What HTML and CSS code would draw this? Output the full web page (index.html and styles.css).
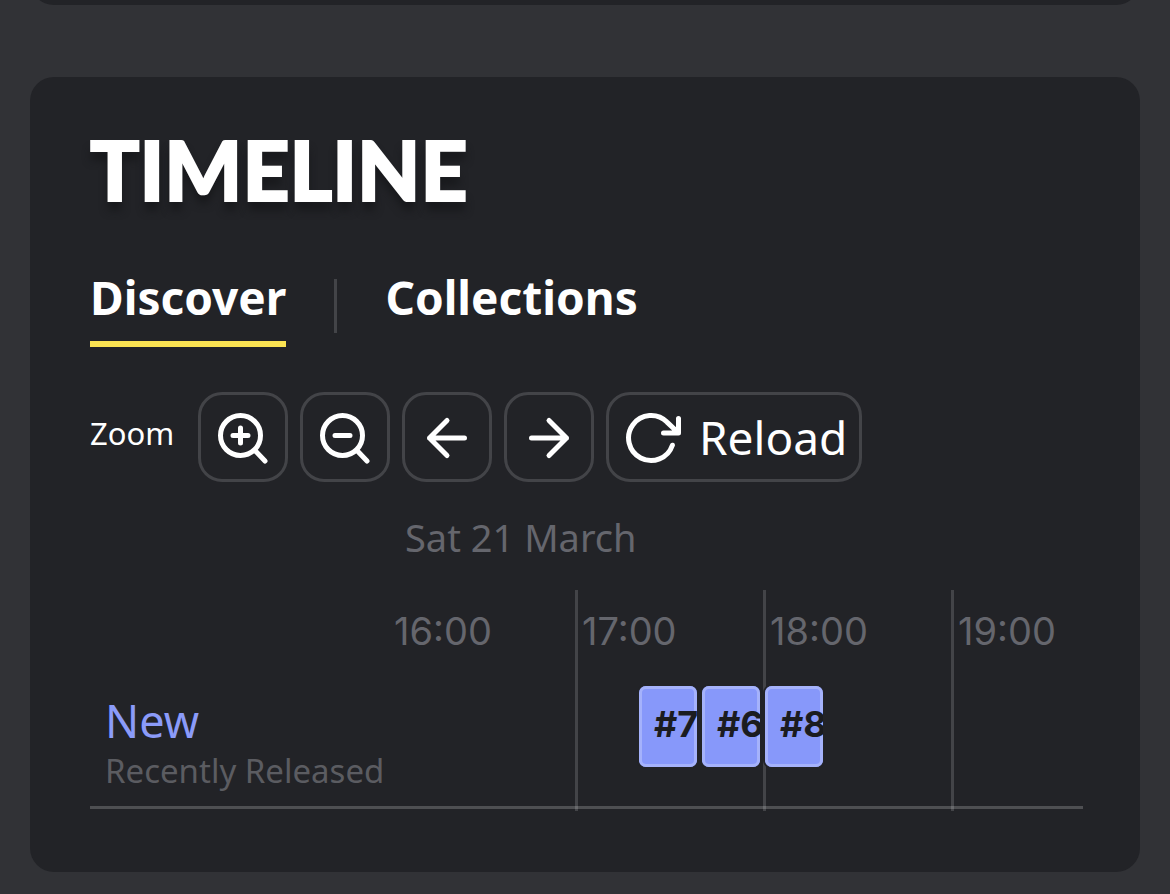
FILE: index.html
```html
<!DOCTYPE html>
<html lang="en">
<head>
<meta charset="utf-8">
<meta name="viewport" content="width=device-width, initial-scale=1">
<title>Timeline</title>
<link rel="stylesheet" href="styles.css">
</head>
<body>
<div class="card card-previous"></div>
<main class="card">
  <h1 class="title">TIMELINE</h1>
  <nav class="tabs">
    <a class="tab tab-active" href="#discover">Discover</a>
    <span class="tab-divider"></span>
    <a class="tab" href="#collections">Collections</a>
  </nav>
  <div class="toolbar">
    <span class="toolbar-label">Zoom</span>
    <button class="tool" type="button" aria-label="Zoom in">
      <svg class="icon" viewBox="0 0 54 54"><circle cx="24.5" cy="25.5" r="20"/><path d="M39 40.5l10 10.5M24.5 18v15M17 25.5h15"/></svg>
    </button>
    <button class="tool" type="button" aria-label="Zoom out">
      <svg class="icon" viewBox="0 0 54 54"><circle cx="24.5" cy="25.5" r="20"/><path d="M39 40.5l10 10.5M17 25.5h15"/></svg>
    </button>
    <button class="tool" type="button" aria-label="Earlier">
      <svg class="icon" viewBox="0 0 54 54"><path d="M44.5 28H9.5M27 10.5L9.5 28l17.5 17.5"/></svg>
    </button>
    <button class="tool" type="button" aria-label="Later">
      <svg class="icon" viewBox="0 0 54 54"><path d="M9.5 28H44.5M27 10.5L44.5 28l-17.5 17.5"/></svg>
    </button>
    <button class="tool tool-wide" type="button">
      <svg class="icon icon-wide" viewBox="0 0 58 54"><path d="M48.4 35.2A22.5 22.5 0 1 1 43 12.1L54 22.5M54.5 8.5v14.5H39.5"/></svg>
      Reload
    </button>
  </div>
  <p class="date">Sat 21 March</p>
  <section class="timeline">
    <div class="hour hour-first">16:00</div>
    <div class="hour hour-second">17:00</div>
    <div class="hour hour-third">18:00</div>
    <div class="hour hour-fourth">19:00</div>
    <div class="row">
      <div class="row-name">
        <a class="row-link" href="#new">New</a>
        <span class="row-note">Recently Released</span>
      </div>
      <div class="track">
        <a class="event" href="#7">#7</a>
        <a class="event" href="#6">#6</a>
        <a class="event" href="#8">#8</a>
      </div>
    </div>
  </section>
</main>
</body>
</html>
```
FILE: styles.css
```css
* { box-sizing: border-box; }

body {
  margin: 0;
  padding: 0 30px 22px;
  background: #313236;
  color: #fff;
  font-family: "Noto Sans", sans-serif;
}

.card {
  padding: 60px 57px 61px 60px;
  border-radius: 24px;
  background: #222327;
}

.card-previous {
  height: 60px;
  margin: -55px 0 72px;
  padding: 0;
}

.title {
  margin: 0;
  font-family: Lato, sans-serif;
  font-size: 82px;
  font-weight: 900;
  line-height: 64px;
  -webkit-text-stroke: 2px #fff;
  text-shadow: 0 9px 9px #17181b;
}

.tabs {
  display: flex;
  gap: 48px;
  margin-top: 66px;
}

.tab {
  padding-bottom: 14px;
  border-bottom: 6px solid transparent;
  color: #fff;
  font-size: 46px;
  font-weight: 700;
  line-height: 60px;
  text-decoration: none;
}

.tab-active { border-color: #fae352; }

.tab-divider {
  width: 3px;
  height: 54px;
  margin-top: 12px;
  background: #434448;
}

.toolbar {
  display: flex;
  align-items: center;
  gap: 12px;
  margin-top: 45px;
}

.toolbar-label {
  flex: 0 0 96px;
  padding-bottom: 8px;
  font-size: 31px;
  line-height: 40px;
}

.tool {
  display: flex;
  align-items: center;
  justify-content: center;
  width: 90px;
  height: 90px;
  padding: 0;
  border: 3px solid #434448;
  border-radius: 24px;
  background: transparent;
  color: #fff;
  font: inherit;
  font-size: 46px;
}

.tool-wide {
  gap: 17px;
  width: auto;
  padding: 0 12px 0 15px;
}

.icon {
  flex: none;
  width: 54px;
  height: 54px;
  fill: none;
  stroke: currentColor;
  stroke-width: 5;
  stroke-linecap: round;
  stroke-linejoin: round;
}

.icon-wide { width: 58px; }

.date {
  margin: 31px 0 29px 315px;
  color: #65666d;
  font-size: 38px;
  line-height: 48px;
}

.timeline {
  display: grid;
  grid-template-columns: 297px repeat(3, 188px) 1fr;
  grid-template-rows: 84px auto 2px;
}

.hour {
  grid-row: 1 / 4;
  padding-left: 4px;
  border-left: 3px solid #434448;
  color: #65666d;
  font-family: Inter, sans-serif;
  font-size: 38px;
  line-height: 82px;
}

.hour-first { grid-column: 2; border-color: transparent; }
.hour-second { grid-column: 3; }
.hour-third { grid-column: 4; }
.hour-fourth { grid-column: 5; }

.row {
  display: grid;
  grid-row: 2;
  grid-column: 1 / -1;
  grid-template-columns: 297px 1fr;
  border-bottom: 3px solid rgba(255, 255, 255, 0.2);
}

.row-name {
  display: flex;
  flex-direction: column;
  align-items: flex-start;
  padding: 19px 0 13px 15px;
  white-space: nowrap;
}

.row-link {
  color: #8b9bf9;
  font-size: 45px;
  line-height: 56px;
  text-decoration: none;
}

.row-note {
  color: #5b5c61;
  font-size: 33px;
  line-height: 44px;
}

.track {
  display: flex;
  gap: 5px;
  padding: 12px 0 0 252px;
}

.event {
  width: 58px;
  height: 81px;
  padding-left: 15px;
  overflow: hidden;
  border-radius: 7px;
  background: #8798fa;
  box-shadow: inset 0 0 0 3px #a5b2fb, 0 0 0 2px #222327;
  color: #1b1c20;
  font-family: Inter, sans-serif;
  font-size: 36px;
  font-weight: 700;
  line-height: 77px;
  text-decoration: none;
}
```
